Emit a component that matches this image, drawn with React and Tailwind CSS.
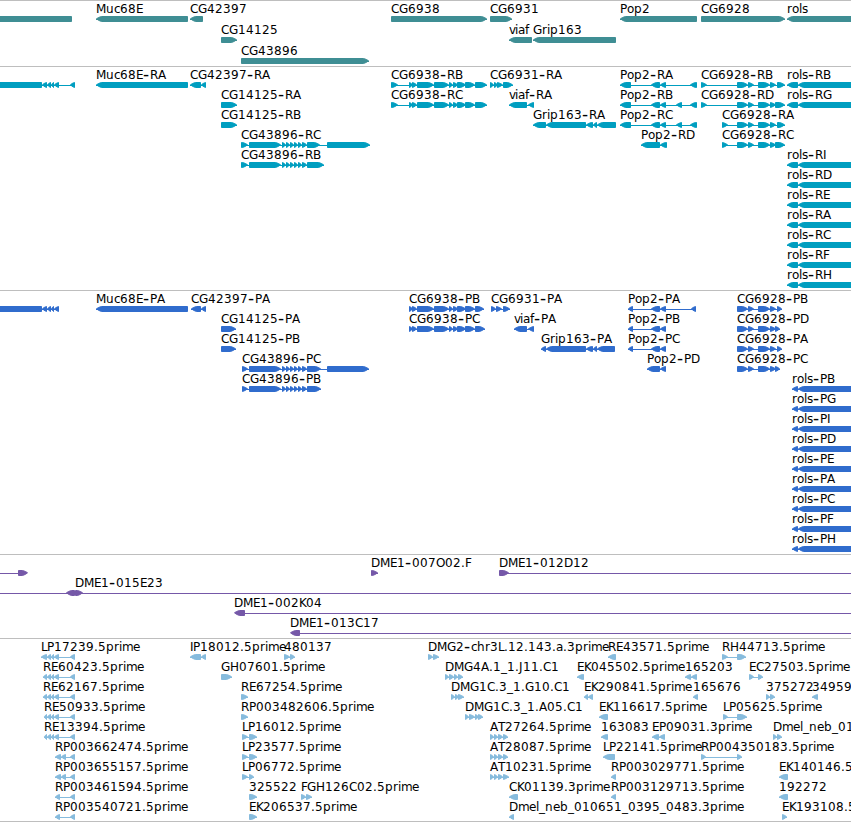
import React from "react";

// advance of each glyph in the track labels, in px
const ADVANCE = {
  A: 8, B: 7, C: 8, D: 9, E: 7, F: 6, G: 9, H: 9, I: 3, J: 4, K: 7, L: 6,
  M: 10, N: 9, O: 9, P: 7, R: 8, T: 7, a: 7, b: 8, c: 6, e: 7, f: 4, h: 8,
  i: 3, l: 3, m: 11, n: 8, o: 7, p: 8, r: 5, s: 6, u: 8, v: 6,
  "-": 7, _: 6, ".": 4,
};

const muc68eTail = [[42, 47], [47, 51], [51, 54], [54, 59]];
const cg43896 = [
  [249, 281], [282, 286], [286, 290], [290, 294], [294, 298], [298, 302], [302, 307],
];
const cg6938 = [
  [409, 413], [412, 417], [417, 434], [434, 449], [449, 453], [453, 458],
  [457, 466], [465, 475],
];
const grip163 = [[546, 586], [586, 593], [593, 597]];
const cg6928 = [[737, 748], [748, 754], [758, 770], [770, 776]];
const at = [[490, 494], [494, 498], [498, 503]];

// feature: [row, label, x, direction, blocks, [line start, line end]]
const genes = [
  [0, "", 0, "l", [[-10, 72]]],
  [0, "Muc68E", 96, "l", [[96, 188]]],
  [0, "CG42397", 190, "l", [[190, 203]]],
  [0, "CG6938", 391, "r", [[391, 487]]],
  [0, "CG6931", 490, "r", [[490, 512]]],
  [0, "Pop2", 620, "l", [[620, 697]]],
  [0, "CG6928", 701, "r", [[701, 785]]],
  [0, "rols", 787, "l", [[787, 860]]],
  [1, "CG14125", 221, "r", [[221, 237]]],
  [1, "viaf", 509, "l", [[509, 532]]],
  [1, "Grip163", 533, "l", [[533, 616]]],
  [2, "CG43896", 241, "r", [[241, 369]]],
];

const transcripts = [
  [0, "", 0, "l", [[-10, 42], ...muc68eTail, [70, 75]]],
  [0, "Muc68E-RA", 96, "l", [[96, 188]]],
  [0, "CG42397-RA", 190, "l", [[190, 201], [201, 206]]],
  [0, "CG6938-RB", 391, "r", [[391, 398], ...cg6938, [475, 487]]],
  [1, "CG6938-RC", 391, "r", [[391, 398], ...cg6938, [475, 487]]],
  [0, "CG6931-RA", 490, "r", [[490, 494], [494, 498], [497, 503], [503, 513]]],
  [0, "Pop2-RA", 620, "l", [[620, 631], [651, 660], [660, 666], [690, 697]]],
  [1, "Pop2-RB", 620, "l", [[620, 631], [651, 660], [660, 666], [676, 682], [690, 697]]],
  [2, "Pop2-RC", 620, "l", [[620, 631], [651, 660], [660, 666], [676, 682], [690, 697]]],
  [3, "Pop2-RD", 641, "l", [[641, 660], [660, 667]]],
  [0, "CG6928-RB", 701, "r", [[701, 707], ...cg6928, [777, 785]]],
  [1, "CG6928-RD", 701, "r", [[701, 707], ...cg6928, [775, 785]]],
  [2, "CG6928-RA", 722, "r", [[722, 728], ...cg6928, [777, 785]]],
  [3, "CG6928-RC", 722, "r", [[722, 728], ...cg6928, [775, 785]]],
  [1, "CG14125-RA", 221, "r", [[221, 237]]],
  [2, "CG14125-RB", 221, "r", [[221, 237]]],
  [1, "viaf-RA", 509, "l", [[509, 527], [528, 534]]],
  [2, "Grip163-RA", 533, "l", [[533, 546], ...grip163, [597, 616]]],
  [3, "CG43896-RC", 241, "r", [[241, 248], ...cg43896, [307, 320], [327, 370]]],
  [4, "CG43896-RB", 241, "r", [[241, 248], ...cg43896, [307, 324]]],
  ...[[0, "RB"], [1, "RG"], [4, "RI"], [5, "RD"], [6, "RE"], [7, "RA"], [8, "RC"], [9, "RF"], [10, "RH"]].map(
    ([row, name]) => [row, "rols-" + name, 787, "l", [[787, 798], [798, 860]]]
  ),
];

const proteins = [
  [0, "", 0, "l", [[-10, 42], ...muc68eTail]],
  [0, "Muc68E-PA", 96, "l", [[96, 188]]],
  [0, "CG42397-PA", 191, "l", [[191, 201], [201, 206]]],
  [0, "CG6938-PB", 409, "r", [...cg6938, [475, 484]]],
  [1, "CG6938-PC", 409, "r", [...cg6938, [475, 485]]],
  [0, "CG6931-PA", 491, "r", [[491, 496], [496, 502], [503, 510]]],
  [0, "Pop2-PA", 628, "l", [[628, 633], [651, 660], [660, 666], [691, 696]]],
  [1, "Pop2-PB", 628, "l", [[628, 633], [651, 660], [660, 666]]],
  [2, "Pop2-PC", 628, "l", [[628, 633], [651, 660], [660, 666]]],
  [3, "Pop2-PD", 647, "l", [[647, 660], [660, 666]]],
  [0, "CG6928-PB", 737, "r", [...cg6928, [777, 782]]],
  [1, "CG6928-PD", 737, "r", [...cg6928, [775, 780]]],
  [2, "CG6928-PA", 737, "r", [...cg6928, [777, 782]]],
  [3, "CG6928-PC", 737, "r", [...cg6928, [775, 780]]],
  [1, "CG14125-PA", 221, "r", [[221, 236]]],
  [2, "CG14125-PB", 221, "r", [[221, 236]]],
  [1, "viaf-PA", 514, "l", [[514, 527], [528, 534]]],
  [2, "Grip163-PA", 541, "l", [[541, 546], ...grip163, [597, 615]]],
  [3, "CG43896-PC", 242, "r", [[242, 248], ...cg43896, [307, 321], [327, 369]]],
  [4, "CG43896-PB", 242, "r", [[242, 248], ...cg43896, [307, 321]]],
  ...["PB", "PG", "PI", "PD", "PE", "PA", "PC", "PF", "PH"].map((name, i) => [
    i + 4, "rols-" + name, 792, "l", [[792, 798], [798, 860]],
  ]),
];

const clones = [
  [0, "", 0, "r", [[18, 28]], [-10, 20]],
  [0, "DME1-007O02.F", 371, "r", [[371, 378]]],
  [0, "DME1-012D12", 499, "r", [[499, 509]], [500, 860]],
  [1, "", 0, "l", [[66, 75]], [-10, 860]],
  [1, "DME1-015E23", 75, "r", [[75, 83]]],
  [2, "DME1-002K04", 234, "l", [[234, 245]], [240, 860]],
  [3, "DME1-013C17", 290, "l", [[290, 300]], [295, 860]],
];

const ests = [
  [0, "LP17239.5prime", 41, "l", [[41, 47], ...muc68eTail.slice(1), [70, 75]]],
  [0, "IP18012.5prime", 190, "l", [[190, 201], [201, 206]]],
  [0, "480137", 284, "r", [[284, 290], [290, 295]]],
  [0, "DMG2-chr3L.12.143.a.3prime", 428, "r", [[428, 433], [433, 439]]],
  [0, "RE43571.5prime", 608, "l", [[608, 616]]],
  [0, "RH44713.5prime", 722, "r", [[722, 728], [737, 746]]],
  [1, "RE60423.5prime", 43, "l", [[43, 47], ...muc68eTail.slice(1), [70, 75]]],
  [1, "GH07601.5prime", 221, "r", [[221, 232]]],
  [1, "DMG4A.1_1.J11.C1", 445, "r", [[445, 449], [449, 454], [454, 458], [458, 463]]],
  [1, "EK045502.5prime", 577, "l", [[577, 584]]],
  [1, "165203", 685, "l", [[685, 691], [691, 697]]],
  [1, "EC27503.5prime", 749, "r", [[749, 754], [758, 763]]],
  [2, "RE62167.5prime", 43, "l", [[43, 47], ...muc68eTail.slice(1), [70, 75]]],
  [2, "RE67254.5prime", 241, "r", [[241, 248]]],
  [2, "DMG1C.3_1.G10.C1", 451, "r", [[451, 455], [455, 459], [458, 464]]],
  [2, "EK290841.5prime", 584, "l", [[584, 588], [588, 593]]],
  [2, "165676", 693, "l", [[693, 698]]],
  [2, "375272", 766, "r", [[766, 770], [770, 775]]],
  [2, "34959", 812, "l", [[812, 818]]],
  [3, "RE50933.5prime", 44, "l", [[44, 47], ...muc68eTail.slice(1), [70, 75]]],
  [3, "RP003482606.5prime", 241, "r", [[241, 248]]],
  [3, "DMG1C.3_1.A05.C1", 465, "r", [[465, 469], [469, 475], [475, 479], [478, 483]]],
  [3, "EK116617.5prime", 599, "l", [[599, 608]]],
  [3, "LP05625.5prime", 723, "r", [[723, 728], [737, 747]]],
  [4, "RE13394.5prime", 44, "l", [[44, 47], ...muc68eTail.slice(1), [70, 75]]],
  [4, "LP16012.5prime", 242, "r", [[242, 248], [249, 257]]],
  [4, "AT27264.5prime", 490, "r", [...at, [503, 508]]],
  [4, "163083", 601, "l", [[601, 608]]],
  [4, "EP09031.3prime", 652, "l", [[652, 659], [659, 665]]],
  [4, "Dmel_neb_01", 773, "r", [[773, 777], [777, 782]]],
  [5, "RP003662474.5prime", 55, "l", [[55, 61], [61, 66], [70, 75]]],
  [5, "LP23577.5prime", 242, "r", [[242, 248], [249, 257]]],
  [5, "AT28087.5prime", 490, "r", [...at, [503, 508]]],
  [5, "LP22141.5prime", 603, "l", [[603, 615]]],
  [5, "RP004350183.5prime", 701, "r", [[701, 706], [737, 742]]],
  [6, "RP003655157.5prime", 55, "l", [[55, 61], [61, 66], [70, 75]]],
  [6, "LP06772.5prime", 242, "r", [[242, 248], [249, 254]]],
  [6, "AT10231.5prime", 490, "r", [...at, [503, 509]]],
  [6, "RP003029771.5prime", 611, "l", [[611, 616]]],
  [6, "EK140146.5", 779, "l", [[779, 788]]],
  [7, "RP003461594.5prime", 55, "l", [[55, 60], [70, 75]]],
  [7, "325522", 249, "r", [[249, 257]]],
  [7, "FGH126C02.5prime", 301, "r", [[301, 306], [306, 312]]],
  [7, "CK01139.3prime", 509, "l", [[509, 518]]],
  [7, "RP003129713.5prime", 611, "l", [[611, 616]]],
  [7, "192272", 779, "l", [[779, 788]]],
  [8, "RP003540721.5prime", 55, "l", [[55, 60], [70, 75]]],
  [8, "EK206537.5prime", 249, "r", [[249, 257]]],
  [8, "Dmel_neb_010651_0395_0483.3prime", 509, "l", [[509, 514]]],
  [8, "EK193108.5", 782, "r", [[782, 787]]],
];

const tracks = [
  { name: "genes", features: genes, height: "h-[66px]", color: "text-[#3f8e94]", pitch: 21 },
  { name: "transcripts", features: transcripts, height: "h-[224px]", color: "text-[#009ec0]", pitch: 20 },
  { name: "proteins", features: proteins, height: "h-[264px]", color: "text-[#306ccd]", pitch: 20 },
  { name: "clones", features: clones, height: "h-[84px]", color: "text-[#7558a8]", pitch: 20 },
  { name: "ests", features: ests, height: "h-[183px]", color: "text-[#86bbdd]", pitch: 20 },
];

const glyphs = (label, x) => {
  let pos = x;
  return label.split("").map((char) => {
    const glyph = { char, x: pos };
    pos += ADVANCE[char] || 8;
    return glyph;
  });
};

// outlined with a 1px stroke, so the points sit on pixel centres
const arrowPath = ([start, end], direction, y) => {
  const right = direction === "r";
  const base = right ? start + 0.5 : end - 0.5;
  const tip = right ? end - 0.5 : start + 0.5;
  const step = right ? -1 : 1;
  const head = Math.min(5, Math.abs(tip - base));
  const neck = tip + step * head;
  const nose = tip + step * head * 0.4;
  return `M${base} ${y + 0.5}H${neck}L${nose} ${y + 1.5}L${tip} ${y + 2.8}L${nose} ${y + 4.3}L${neck} ${y + 5.5}H${base}z`;
};

function Label({ label, x, y }) {
  const chars = glyphs(label, x);
  const dash = label.indexOf("-");
  const parts = dash === -1 ? [chars] : [chars.slice(0, dash), chars.slice(dash, dash + 1), chars.slice(dash + 1)];

  return (
    <text y={y} className="fill-black text-[12px]">
      {parts.map((part, i) =>
        part[0].char === "-" ? (
          // the dash is wider than the font's own hyphen
          <tspan key={i} x={part[0].x} y={y + 1} className="text-[17px]">
            -
          </tspan>
        ) : (
          <tspan key={i} x={part.map((glyph) => glyph.x).join(" ")} y={y}>
            {part.map((glyph) => glyph.char).join("")}
          </tspan>
        )
      )}
    </text>
  );
}

function Feature({ feature, pitch }) {
  const [row, label, x, direction, blocks, line] = feature;
  const y = row * pitch + 15;
  const [lineStart, lineEnd] = line || [blocks[0][0], blocks[blocks.length - 1][1]];

  return (
    <g>
      <rect x={lineStart} y={y + 3} width={lineEnd - lineStart} height="1" fill="currentColor" />
      <path
        d={blocks.map((block) => arrowPath(block, direction, y)).join("")}
        fill="currentColor"
        stroke="currentColor"
        strokeLinejoin="bevel"
      />
      {label && <Label label={label} x={x} y={y - 3} />}
    </g>
  );
}

function Track({ track }) {
  return (
    <section className={`w-full border-t border-[#bebebe] ${track.height} ${track.color}`}>
      <svg className="block h-full w-full overflow-hidden">
        {track.features.map((feature, i) => (
          <Feature key={i} feature={feature} pitch={track.pitch} />
        ))}
      </svg>
    </section>
  );
}

function App() {
  return (
    <main className="flex h-[822px] w-[851px] flex-col overflow-hidden border-b border-[#bebebe] bg-white font-['DejaVu_Sans',sans-serif]">
      {tracks.map((track) => (
        <Track key={track.name} track={track} />
      ))}
    </main>
  );
}

export default App;
